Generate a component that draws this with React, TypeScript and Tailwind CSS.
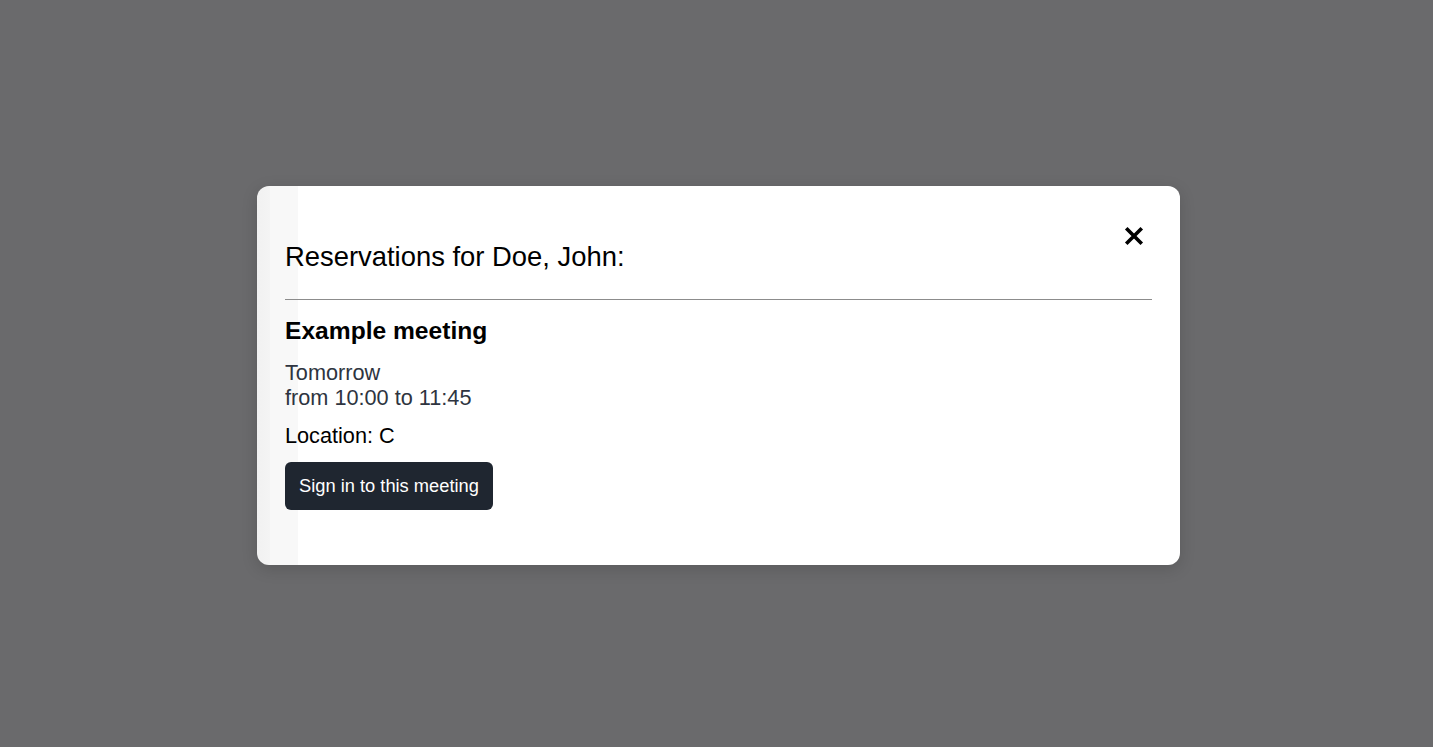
import React from "react";

const CloseIcon = () => (
  <svg width="20" height="20" viewBox="0 0 20 20" fill="none">
    <path d="M3.5 3.5L16.5 16.5M16.5 3.5L3.5 16.5" stroke="#000" strokeWidth="3.6" strokeLinecap="square" />
  </svg>
);

const ReservationModal = () => {
  return (
    <div className="relative w-[923px] rounded-xl bg-[linear-gradient(to_right,#f1f1f1_0px,#f4f4f4_13px,#f8f8f8_13px,#f8f8f8_41px,#ffffff_41px)] px-[28px] pt-[55px] pb-[55px] shadow-[0_4px_16px_rgba(0,0,0,0.15)]">
      <button className="absolute top-[40px] right-[36px] flex h-5 w-5 items-center justify-center">
        <CloseIcon />
      </button>
      <h2 className="text-[27.4px] leading-[32px] text-black">Reservations for Doe, John:</h2>
      <hr className="mt-[26px] border-0 border-t border-[#8c8c8c]" />
      <h3 className="mt-[16px] text-[24.6px] leading-[30px] font-bold text-black">Example meeting</h3>
      <p className="mt-[14px] text-[21.7px] leading-[25px] text-[#2e3440]">
        Tomorrow
        <br />
        from 10:00 to 11:45
      </p>
      <p className="mt-[13px] text-[21.7px] leading-[25px] text-black">Location: C</p>
      <button className="mt-[14px] h-[48px] rounded-md bg-[#1f2630] px-[14px] text-[18.3px] text-white">
        Sign in to this meeting
      </button>
    </div>
  );
};

export default function App() {
  return (
    <div
      className="flex h-[747px] w-full items-center justify-center bg-[#6a6a6c] pt-[4px] pl-1"
      style={{ fontFamily: '"Liberation Sans", Arial, sans-serif' }}
    >
      <ReservationModal />
    </div>
  );
}
